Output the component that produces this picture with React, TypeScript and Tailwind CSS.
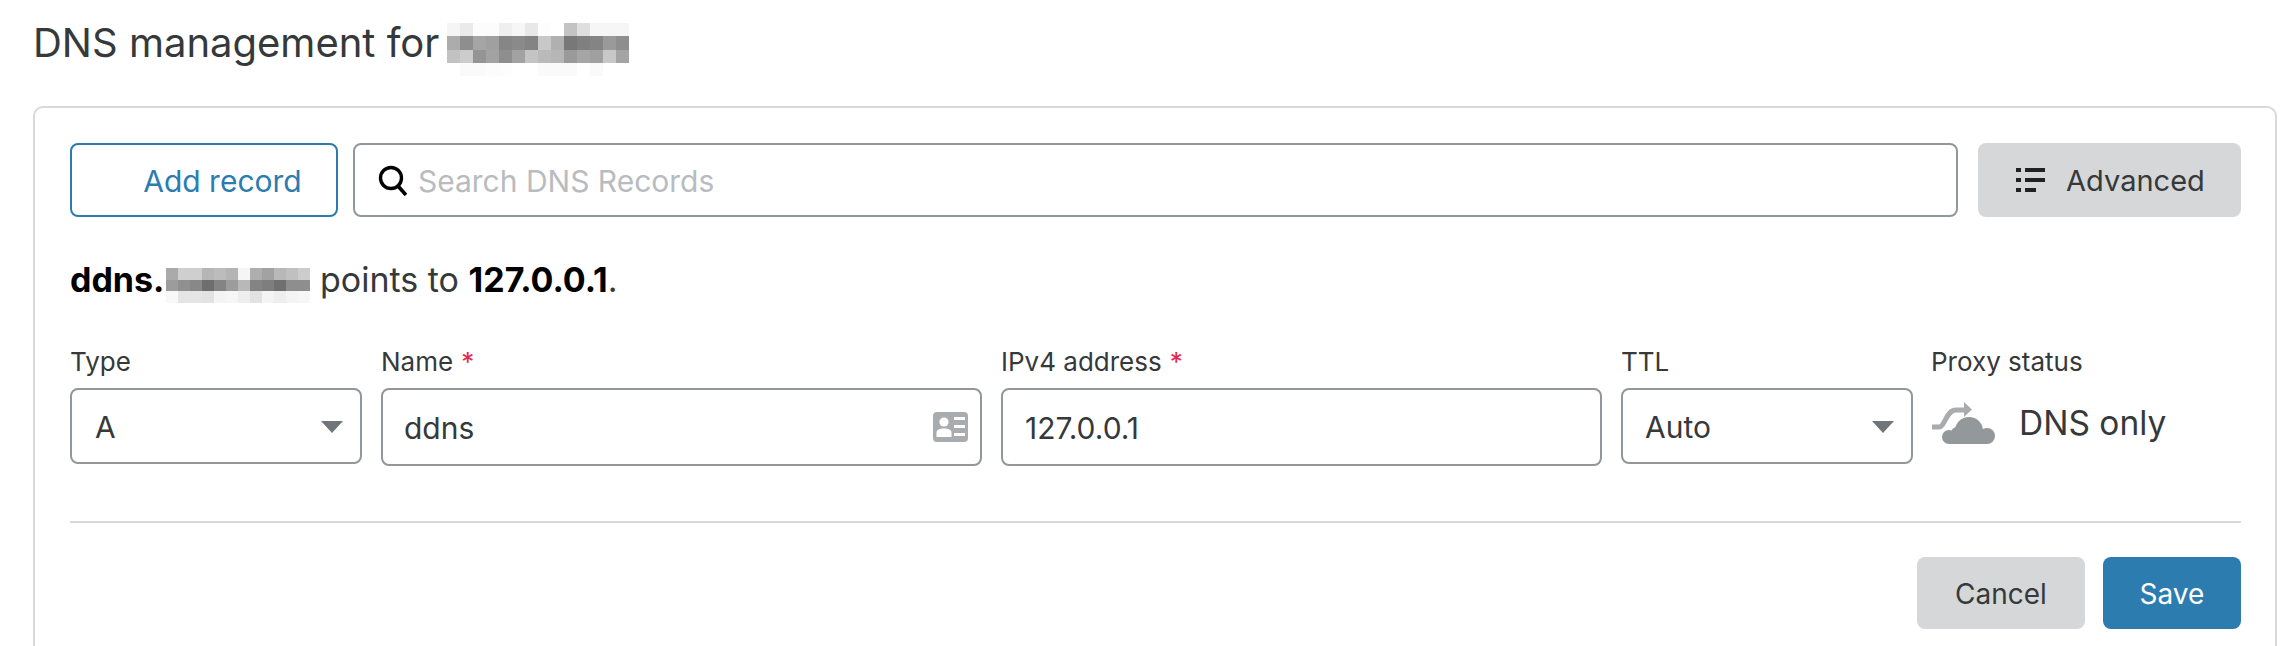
const blurA = [
  ["f5","ea","fc","fc","ef","f6","e8","fd","ff","c3","df","f6","f6","f6"],
  ["ac","8e","a5","a0","86","8a","84","c8","b0","78","80","84","9a","8e"],
  ["c2","cc","94","a2","8e","a2","c4","ba","b6","9a","a6","a0","c8","a4"],
  ["ff","fa","fa","fc","fd","ff","ff","fa","fa","fa","ff","fa","ff","ff"],
];
const blurB = [
  ["aa","cf","cf","b6","bc","b4","f5","ae","a2","b8","c0","cc"],
  ["9c","90","88","6e","84","9c","b8","84","7e","70","8e","8e"],
  ["f8","e5","e5","e2","f4","f6","ee","e2","f4","ee","f4","f6"],
];

const Mosaic = ({ data, w, h, className }: { data: string[][]; w: number; h: number; className: string }) => (
  <svg width={data[0].length * w} height={data.length * h} className={className} shapeRendering="crispEdges">
    {data.map((row, y) =>
      row.map((c, x) => (
        <rect key={`${x}-${y}`} x={x * w} y={y * h} width={w} height={h} fill={`#${c}${c}${c}`} />
      ))
    )}
  </svg>
);

const Caret = () => (
  <svg width="22" height="12" viewBox="0 0 22 12" className="absolute right-[17px] top-[31px]">
    <path d="M0 0H22L11 12Z" fill="#6f7578" />
  </svg>
);

const SearchIcon = () => (
  <svg width="30" height="31" viewBox="0 0 30 31" className="shrink-0">
    <circle cx="14" cy="13" r="10.5" fill="none" stroke="#000" strokeWidth="3.4" />
    <path d="M21 21L29 30" stroke="#000" strokeWidth="3.6" fill="none" />
  </svg>
);

const ListIcon = () => (
  <svg width="29" height="24" viewBox="0 0 29 24" className="shrink-0">
    <path d="M0 0H5V4H0ZM9 0H29V4H9ZM0 10H5V14H0ZM9 10H29V14H9ZM0 20H5V24H0ZM9 20H20V24H9Z" fill="#1f2122" />
  </svg>
);

const CardIcon = () => (
  <svg width="35" height="30" viewBox="0 0 35 30" className="absolute right-[12px] top-[22px]">
    <rect width="35" height="30" rx="4" fill="#a9acae" />
    <circle cx="11" cy="10" r="4.6" fill="#fff" />
    <path d="M3.5 25V21C3.5 17.5 7 16.5 11 16.5S18.5 17.5 18.5 21V25Z" fill="#fff" />
    <path d="M21 5H32V8H21ZM21 13H32V16H21ZM21 21H32V24H21Z" fill="#fff" />
  </svg>
);

const CloudIcon = () => (
  <svg width="64" height="42" viewBox="0 0 64 42" className="shrink-0">
    <path d="M1 25H8C14 25 15 8 25 8H35" fill="none" stroke="#a9acae" strokeWidth="5" />
    <path d="M33 0L41 7.5L33 15Z" fill="#a9acae" />
    <g fill="#93989b">
      <circle cx="18" cy="35" r="7" />
      <circle cx="26" cy="31" r="6" />
      <circle cx="38" cy="29" r="14" />
      <circle cx="56" cy="34" r="8" />
      <rect x="18" y="30" width="38" height="12" />
    </g>
  </svg>
);

const Req = () => <span className="ml-[8px] text-[#e0294f]">*</span>;

const Label = ({ children }: { children: React.ReactNode }) => (
  <div className="text-[26px] leading-[32px]">{children}</div>
);

const inputBox = "relative mt-[10px] flex items-center rounded-[8px] border-2 border-[#92979b] pt-[2px] text-[30px]";

export default function App() {
  return (
    <div className="h-[646px] w-[2292px] overflow-hidden bg-white font-['Inter',sans-serif] text-[#36393a]">
      <div className="flex h-[106px] items-start pl-[33px] pt-[21px] text-[40px] leading-[44px]">
        <span>DNS management for</span>
        <Mosaic data={blurA} w={13} h={13.25} className="ml-[8px] mt-[2px]" />
      </div>
      <div className="ml-[33px] h-[560px] w-[2244px] rounded-[10px] border-2 border-[#d9d9d9] pl-[35px] pr-[34px] pt-[35px]">
        <div className="flex h-[74px]">
          <button className="w-[268px] rounded-[8px] border-2 border-[#2c7cb0] pl-[37px] pt-[2px] text-[30px] text-[#2c7cb0]">Add record</button>
          <div className="ml-[15px] flex w-[1606px] items-center gap-[11px] rounded-[8px] border-2 border-[#92979b] pl-[22px]">
            <SearchIcon />
            <span className="pt-[2px] text-[30px] text-[#b9bcbe]">Search DNS Records</span>
          </div>
          <button className="ml-[20px] flex w-[263px] items-center gap-[21px] rounded-[8px] bg-[#d5d7d8] pl-[38px] text-[29px]">
            <ListIcon />
            <span className="pt-[2px]">Advanced</span>
          </button>
        </div>
        <p className="mt-[41px] h-[44px] text-[34px] leading-[44px]">
          <b className="font-bold text-black">ddns.</b>
          <Mosaic data={blurB} w={12} h={11.7} className="ml-[2px] mt-[10px] inline-block align-top" /> points to <b className="font-bold text-black">127.0.0.1</b>.
        </p>
        <div className="mt-[44px] flex">
          <div className="w-[292px]">
            <Label>Type</Label>
            <div className={`${inputBox} h-[76px] pl-[23px]`}>A<Caret /></div>
          </div>
          <div className="ml-[19px] w-[601px]">
            <Label>Name<Req /></Label>
            <div className={`${inputBox} h-[78px] pl-[21px]`}>ddns<CardIcon /></div>
          </div>
          <div className="ml-[19px] w-[601px]">
            <Label>IPv4 address<Req /></Label>
            <div className={`${inputBox} h-[78px] pl-[22px]`}>127.0.0.1</div>
          </div>
          <div className="ml-[19px] w-[292px]">
            <Label>TTL</Label>
            <div className={`${inputBox} h-[76px] pl-[22px]`}>Auto<Caret /></div>
          </div>
          <div className="ml-[18px]">
            <Label>Proxy status</Label>
            <div className="mt-[10px] flex h-[70px] items-center gap-[24px] text-[33.5px]">
              <CloudIcon />
              <span>DNS only</span>
            </div>
          </div>
        </div>
        <div className="mt-[55px] h-[2px] bg-[#d9d9d9]" />
        <div className="mt-[34px] flex justify-end gap-[18px]">
          <button className="h-[72px] w-[168px] rounded-[8px] bg-[#d5d7d8] pt-[2px] text-[28px]">Cancel</button>
          <button className="h-[72px] w-[138px] rounded-[8px] bg-[#2c7cb0] pt-[2px] text-[28px] text-white">Save</button>
        </div>
      </div>
    </div>
  );
}
